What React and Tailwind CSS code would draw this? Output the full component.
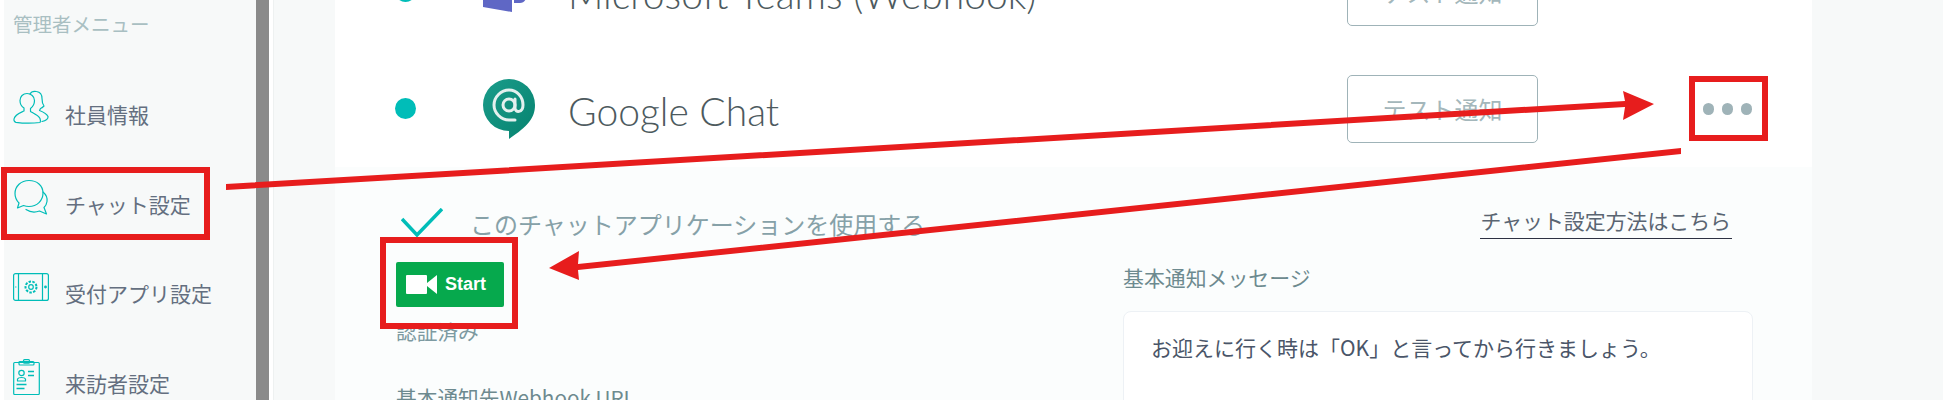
const jp = { fontFamily: '"Noto Sans CJK JP", "Noto Sans", sans-serif' };

function PersonIcon() {
  return (
    <svg width="36" height="36" viewBox="0 0 36 36" fill="none" stroke="#00bdb8" strokeWidth="1.200" strokeLinejoin="round" strokeLinecap="round">
      <path d="M14 3.500c-4 0-7 3-7 7 0 3 1.500 6 4 7.500v3c-3 1.500-9 3-10 8-.3 1.500.5 3 2 3.300 7 1 17 1 24 .2 1-1 .5-2.500 0-4-1.500-3-6-5-9.500-7v-3c2.500-2 4-5 4-8 0-4-3.500-7-7.500-7z" />
      <path d="M17 4c1-2 4-3 6.500-2.500 3.500.5 5.500 3.500 5.500 7 0 3 .5 5.500 2 7.500-1 1-2 2-3.500 2.500l-1 2c2.500 1 7 3 8.500 6 .3 2-2 4-6 5" />
    </svg>
  );
}

function ChatIcon() {
  return (
    <svg width="36" height="38" viewBox="0 0 36 38" fill="none" stroke="#00bdb8" strokeWidth="1.200" strokeLinejoin="round" strokeLinecap="round">
      <path d="M16 1.500C8 1.500 2 7 2 14.500c0 4 1.500 7 4 9.500l-1.500 5 6-2.500c2 .8 3.500 1 5.500 1 8 0 14-6 14-13.500S24 1.500 16 1.500z" />
      <path d="M30 13c3 2.500 4.500 6 4 9.500-.3 2.500-1.500 4.500-3 6l2.500 6.500-7-3c-4 1.500-9 1.500-13.500-1.500" />
    </svg>
  );
}

function TabletIcon() {
  return (
    <svg width="36" height="28" viewBox="0 0 36 28" fill="none" stroke="#00bdb8" strokeWidth="1.200" strokeLinejoin="round">
      <rect x="0.600" y="0.600" width="34.800" height="26.800" rx="2" />
      <path d="M5.500 1v26M29.500 1v26" />
      <circle cx="18" cy="14" r="2.300" />
      <circle cx="18" cy="14" r="5.500" strokeDasharray="2.500 1.300" strokeWidth="2" />
      <circle cx="32.500" cy="14" r="0.800" fill="#00bdb8" />
      <path d="M2.200 14h1.200" />
    </svg>
  );
}

function ClipboardIcon() {
  return (
    <svg width="27" height="36" viewBox="0 0 27 36" fill="none" stroke="#00bdb8" strokeWidth="1.200" strokeLinejoin="round">
      <rect x="0.700" y="3.500" width="25.600" height="32" rx="1" />
      <rect x="6" y="2.500" width="15" height="3.500" rx="1" />
      <rect x="10.500" y="0.700" width="6" height="3.500" rx="1" />
      <circle cx="8.500" cy="14" r="2.700" />
      <path d="M4.500 22v-2c1-2 7-2 8 0v2z" />
      <path d="M15 12.500h6M15 16.500h6M3.500 25.500h10M3.500 29.500h8" strokeWidth="1.500" />
    </svg>
  );
}

function TeamsIcon() {
  return (
    <svg width="52" height="40" viewBox="0 0 52 40" fill="#5f67c5">
      <path d="M0 5l29-5v40L0 35z" />
      <path d="M31 9h12v16c0 4-3 6-6 6h-6z" />
      <path d="M45 9h7v11c0 3-3 5-7 5z" />
    </svg>
  );
}

function GoogleChatIcon() {
  return (
    <svg width="52" height="60" viewBox="0 0 52 60">
      <defs>
        <linearGradient id="gchat" x1="0" y1="0" x2="1" y2="1">
          <stop offset="0" stopColor="#1a9c8a" />
          <stop offset="1" stopColor="#06826f" />
        </linearGradient>
      </defs>
      <path d="M26 0a26 26 0 0 1 26 26c0 13-7 21-26 34v-8A26 26 0 0 1 26 0z" fill="url(#gchat)" />
      <circle cx="26" cy="26" r="6" fill="none" stroke="#e3f0ee" strokeWidth="3" />
      <path d="M32 20v9c0 5 8 5 8-3 0-8-6-15-14-15s-15 7-15 15 7 15 15 15h6" fill="none" stroke="#e3f0ee" strokeWidth="3" strokeLinecap="round" />
    </svg>
  );
}

function CameraIcon() {
  return (
    <svg width="31" height="19" viewBox="0 0 31 19" fill="#fff">
      <path d="M0 1a1 1 0 0 1 1-1h19a1 1 0 0 1 1 1v17a1 1 0 0 1-1 1H1a1 1 0 0 1-1-1z" />
      <path d="M21 8l10-8v19l-10-8z" />
    </svg>
  );
}

function ChannelRow({ icon, name, dots }) {
  return (
    <div className="flex h-[117px] items-center pl-[60px]">
      <span className="h-[21px] w-[21px] rounded-full bg-[#00bdb8]" />
      <div className="ml-[67px] flex w-[85px] shrink-0 items-center">{icon}</div>
      <p className="mt-[5px] flex-1 text-[39px] font-light text-[#4d5a5e]" style={{ fontFamily: 'Lato, sans-serif' }}>{name}</p>
      <button className="ml-auto h-[68px] w-[191px] rounded-[5px] border border-[#9fb3b8] text-[24px] text-[#a4b7bb]">テスト通知</button>
      <div className="ml-[165px] mr-[60px] flex w-[49px] justify-between">
        {dots && (
          <>
            <span className="h-[12px] w-[11px] rounded-full bg-[#9fb3b8]" />
            <span className="h-[12px] w-[11px] rounded-full bg-[#9fb3b8]" />
            <span className="h-[12px] w-[11px] rounded-full bg-[#9fb3b8]" />
          </>
        )}
      </div>
    </div>
  );
}

const menuItems = [
  { label: "社員情報", icon: <PersonIcon /> },
  { label: "チャット設定", icon: <ChatIcon /> },
  { label: "受付アプリ設定", icon: <TabletIcon /> },
  { label: "来訪者設定", icon: <ClipboardIcon /> },
];

export default function App() {
  return (
    <div className="relative flex h-[400px] w-[1943px] overflow-hidden bg-[#f7f9f9]" style={jp}>
      <div className="w-[4px] shrink-0 bg-white" />
      <aside className="w-[252px] shrink-0 bg-[#f7f9f9] pl-[9px]">
        <p className="h-[70px] pt-[10px] text-[19.500px] leading-[28px] text-[#a9bfc2]">管理者メニュー</p>
        {menuItems.map((item) => (
          <div key={item.label} className="flex h-[89.500px] items-center">
            <div className="mb-[13px] flex w-[52px] shrink-0">{item.icon}</div>
            <span className="text-[21px] text-[#646f80]">{item.label}</span>
          </div>
        ))}
      </aside>
      <div className="w-[13px] shrink-0 bg-[#8a8a8a]" />
      <div className="w-[5px] shrink-0 border-r border-[#eef1f1] bg-white" />
      <main className="ml-[61px] mr-[131px] w-[1477px] shrink-0 bg-white">
        <div className="-mt-[67px]">
          <ChannelRow icon={<TeamsIcon />} name="Microsoft Teams (Webhook)" />
          <ChannelRow icon={<GoogleChatIcon />} name="Google Chat" dots />
        </div>
        <section className="h-[300px] bg-[#fbfdfd] pl-[61px] pr-[80px] pt-[36px]">
          <div className="flex h-[59px] items-start justify-between">
            <div className="flex items-center">
              <svg className="ml-[5px]" width="42" height="30" viewBox="0 0 42 30" fill="none" stroke="#00bdb8" strokeWidth="3.500">
                <path d="M1 11l15 16L41 1" />
              </svg>
              <span className="ml-[27px] mt-[3px] text-[24px] text-[#86a1a8]">このチャットアプリケーションを使用する</span>
            </div>
            <a className="mt-[-1px] h-[37px] border-b border-[#2d3142] px-px text-[20.900px] leading-[36px] text-[#5a6572]">チャット設定方法はこちら</a>
          </div>
          <div className="grid grid-cols-[727px_630px]">
            <div>
              <div className="flex h-[45px] w-[108px] items-center rounded-[2px] bg-[#06a94d] pl-[10px] text-[18px] font-bold text-white" style={{ fontFamily: '"Liberation Sans", sans-serif' }}>
                <CameraIcon />
                <span className="ml-[8px]">Start</span>
              </div>
              <p className="mt-[9px] text-[20.700px] leading-[30px] text-[#7d9aa1]">認証済み</p>
              <p className="mt-[36px] text-[20.700px] leading-[30px] text-[#6d8a8f]">基本通知先Webhook URL</p>
            </div>
            <div>
              <p className="-mt-px text-[20.900px] leading-[32px] text-[#6d8a8f]">基本通知メッセージ</p>
              <div className="mt-[18px] h-[140px] rounded-[8px] border border-[#edf1f5] bg-white pl-[27px] pt-[19px] text-[21px] leading-[32px] text-[#4a5568]">
                お迎えに行く時は「OK」と言ってから行きましょう。
              </div>
            </div>
          </div>
        </section>
      </main>

      {/* red annotations drawn over the screenshot */}
      <div className="absolute left-[1px] top-[167px] h-[73px] w-[209px] border-[6px] border-[#e71d1d]" />
      <div className="absolute left-[1689px] top-[76px] h-[65px] w-[79px] border-[6px] border-[#e71d1d]" />
      <div className="absolute left-[380px] top-[237px] h-[92px] w-[138px] border-[6px] border-[#e71d1d]" />
      <svg className="absolute left-0 top-0" width="1943" height="400" fill="#e71d1d" stroke="none">
        <path d="M226 184L1625 101L1623 91L1654 104L1623 120L1625 107L226 190z" />
        <path d="M1681 148L578 264L579 251L549 268L579 280L578 270L1681 154z" />
      </svg>
    </div>
  );
}
